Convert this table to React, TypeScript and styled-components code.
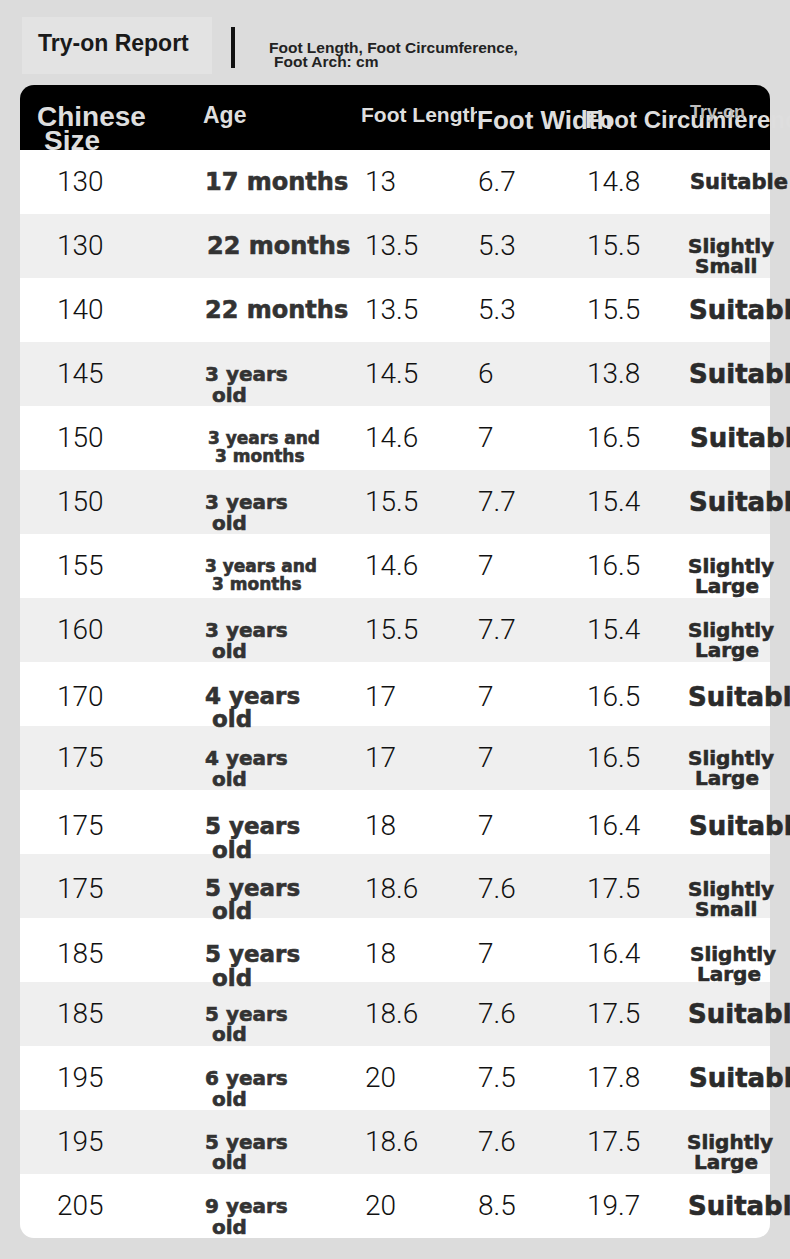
import React from 'react';
import styled, { createGlobalStyle } from 'styled-components';

const GlobalStyle = createGlobalStyle`
  *, *::before, *::after { box-sizing: border-box; }
  html, body { margin: 0; padding: 0; background: #dcdcdc; }
  body { width: 790px; height: 1259px; overflow: hidden; }
`;

const COLS = '183px 158px 116px 108px 102px 83px';

const Page = styled.div`
  width: 790px;
  height: 1259px;
  font-family: "Liberation Sans", Arial, sans-serif;
`;

const TopBar = styled.header`
  height: 85px;
  display: flex;
  align-items: flex-start;
`;

const TitleBox = styled.div`
  margin: 17px 0 0 22px;
  width: 190px;
  height: 57px;
  padding: 0 0 4px 16px;
  background: #e3e3e3;
  display: flex;
  align-items: center;
`;

const Title = styled.h1`
  margin: 0;
  font-size: 23px;
  font-weight: 700;
  color: #1a1a1a;
  white-space: nowrap;
`;

const Divider = styled.div`
  margin: 27px 0 0 19px;
  width: 4px;
  height: 41px;
  background: #111;
`;

const Subtitle = styled.div`
  margin: 41px 0 0 34px;
  font-size: 15.5px;
  line-height: 14px;
  font-weight: 700;
  color: #222;
  white-space: nowrap;
`;

const SubLine = styled.span<{ $indent?: number }>`
  display: block;
  padding-left: ${(p) => p.$indent ?? 0}px;
`;

const Card = styled.section`
  margin: 0 20px;
  width: 750px;
`;

const Head = styled.div`
  height: 65px;
  background: #000;
  border-radius: 14px 14px 0 0;
  display: grid;
  grid-template-columns: ${COLS};
  align-items: start;
  clip-path: inset(0 -40px 0 0);
`;

const HeadCell = styled.div<{ $size: number; $lh: number; $pt: number; $pl?: number; $clip?: boolean; $color?: string }>`
  font-size: ${(p) => p.$size}px;
  line-height: ${(p) => p.$lh}px;
  padding-top: ${(p) => p.$pt}px;
  padding-left: ${(p) => p.$pl ?? 0}px;
  font-weight: 700;
  color: ${(p) => p.$color ?? '#dedede'};
  white-space: nowrap;
  overflow: ${(p) => (p.$clip ? 'hidden' : 'visible')};
`;

const Row = styled.div<{ $alt: boolean }>`
  height: 64px;
  display: grid;
  grid-template-columns: ${COLS};
  align-items: center;
  background: ${(p) => (p.$alt ? '#efefef' : '#ffffff')};
  &:last-child {
    border-radius: 0 0 14px 14px;
  }
`;

const Num = styled.div<{ $pl: number }>`
  padding-left: ${(p) => p.$pl}px;
  font-family: Roboto, "Noto Sans", sans-serif;
  font-weight: 300;
  font-size: 28px;
  line-height: 32px;
  color: #111;
  white-space: nowrap;
`;

const Stack = styled.div<{ $pl: number; $size: number; $lh: number; $two: boolean; $color: string }>`
  padding-left: ${(p) => p.$pl}px;
  padding-top: ${(p) => (p.$two ? p.$lh : 0)}px;
  font-family: "DejaVu Sans", Verdana, sans-serif;
  font-weight: 700;
  font-size: ${(p) => p.$size}px;
  line-height: ${(p) => p.$lh}px;
  color: ${(p) => p.$color};
  -webkit-text-stroke: 0.6px ${(p) => p.$color};
  white-space: nowrap;
`;

const Line = styled.span<{ $sub?: boolean }>`
  display: block;
  padding-left: ${(p) => (p.$sub ? 7 : 0)}px;
`;

type Spec = { lines: string[]; size: number; lh: number; pl: number };
type RowData = { size: string; age: Spec; len: string; wid: string; circ: string; fit: Spec };

const one = (t: string, size: number, pl: number): Spec => ({ lines: [t], size, lh: size + 4, pl });
const two = (a: string, b: string, size: number, lh: number, pl: number): Spec => ({ lines: [a, b], size, lh, pl });

const suit = (size: number, pl: number) => one('Suitable', size, pl);
const slight = (b: string, pl: number) => two('Slightly', b, 20, 20, pl);

const rows: RowData[] = [
  { size: '130', age: one('17 months', 24, 2), len: '13', wid: '6.7', circ: '14.8', fit: suit(21, 3) },
  { size: '130', age: one('22 months', 24, 4), len: '13.5', wid: '5.3', circ: '15.5', fit: slight('Small', 1) },
  { size: '140', age: one('22 months', 24, 2), len: '13.5', wid: '5.3', circ: '15.5', fit: suit(26, 2) },
  { size: '145', age: two('3 years', 'old', 20, 21, 2), len: '14.5', wid: '6', circ: '13.8', fit: suit(26, 2) },
  { size: '150', age: two('3 years and', '3 months', 17, 18, 5), len: '14.6', wid: '7', circ: '16.5', fit: suit(26, 3) },
  { size: '150', age: two('3 years', 'old', 20, 21, 2), len: '15.5', wid: '7.7', circ: '15.4', fit: suit(26, 2) },
  { size: '155', age: two('3 years and', '3 months', 17, 18, 2), len: '14.6', wid: '7', circ: '16.5', fit: slight('Large', 1) },
  { size: '160', age: two('3 years', 'old', 20, 21, 2), len: '15.5', wid: '7.7', circ: '15.4', fit: slight('Large', 1) },
  { size: '170', age: two('4 years', 'old', 23, 23, 2), len: '17', wid: '7', circ: '16.5', fit: suit(26, 1) },
  { size: '175', age: two('4 years', 'old', 20, 21, 2), len: '17', wid: '7', circ: '16.5', fit: slight('Large', 1) },
  { size: '175', age: two('5 years', 'old', 23, 24, 2), len: '18', wid: '7', circ: '16.4', fit: suit(26, 2) },
  { size: '175', age: two('5 years', 'old', 23, 23, 2), len: '18.6', wid: '7.6', circ: '17.5', fit: slight('Small', 1) },
  { size: '185', age: two('5 years', 'old', 23, 24, 2), len: '18', wid: '7', circ: '16.4', fit: slight('Large', 3) },
  { size: '185', age: two('5 years', 'old', 20, 20, 2), len: '18.6', wid: '7.6', circ: '17.5', fit: suit(26, 1) },
  { size: '195', age: two('6 years', 'old', 20, 21, 2), len: '20', wid: '7.5', circ: '17.8', fit: suit(26, 2) },
  { size: '195', age: two('5 years', 'old', 20, 20, 2), len: '18.6', wid: '7.6', circ: '17.5', fit: slight('Large', 0) },
  { size: '205', age: two('9 years', 'old', 20, 21, 2), len: '20', wid: '8.5', circ: '19.7', fit: suit(26, 1) },
];

const TextCell: React.FC<{ spec: Spec; color: string }> = ({ spec, color }) => (
  <Stack $pl={spec.pl} $size={spec.size} $lh={spec.lh} $two={spec.lines.length > 1} $color={color}>
    {spec.lines.map((l, i) => (
      <Line key={i} $sub={i > 0}>
        {l}
      </Line>
    ))}
  </Stack>
);

export default function App() {
  return (
    <>
      <GlobalStyle />
      <Page>
        <TopBar>
          <TitleBox>
            <Title>Try-on Report</Title>
          </TitleBox>
          <Divider />
          <Subtitle>
            <SubLine>Foot Length, Foot Circumference,</SubLine>
            <SubLine $indent={5}>Foot Arch: cm</SubLine>
          </Subtitle>
        </TopBar>
        <Card>
          <Head>
            <HeadCell $size={28} $lh={24} $pt={20} $pl={17}>
              <SubLine>Chinese</SubLine>
              <SubLine $indent={7}>Size</SubLine>
            </HeadCell>
            <HeadCell $size={23} $lh={26} $pt={17}>Age</HeadCell>
            <HeadCell $size={21} $lh={24} $pt={18} $clip>Foot Length</HeadCell>
            <HeadCell $size={26} $lh={28} $pt={21}>Foot Width</HeadCell>
            <HeadCell $size={24} $lh={28} $pt={21}>Foot Circumference</HeadCell>
            <HeadCell $size={18} $lh={20} $pt={17} $pl={3} $color="#bdbdbd">Try-on</HeadCell>
          </Head>
          {rows.map((r, i) => (
            <Row key={i} $alt={i % 2 === 1}>
              <Num $pl={37}>{r.size}</Num>
              <TextCell spec={r.age} color="#333333" />
              <Num $pl={4}>{r.len}</Num>
              <Num $pl={1}>{r.wid}</Num>
              <Num $pl={2}>{r.circ}</Num>
              <TextCell spec={r.fit} color="#2b2b2b" />
            </Row>
          ))}
        </Card>
      </Page>
    </>
  );
}
